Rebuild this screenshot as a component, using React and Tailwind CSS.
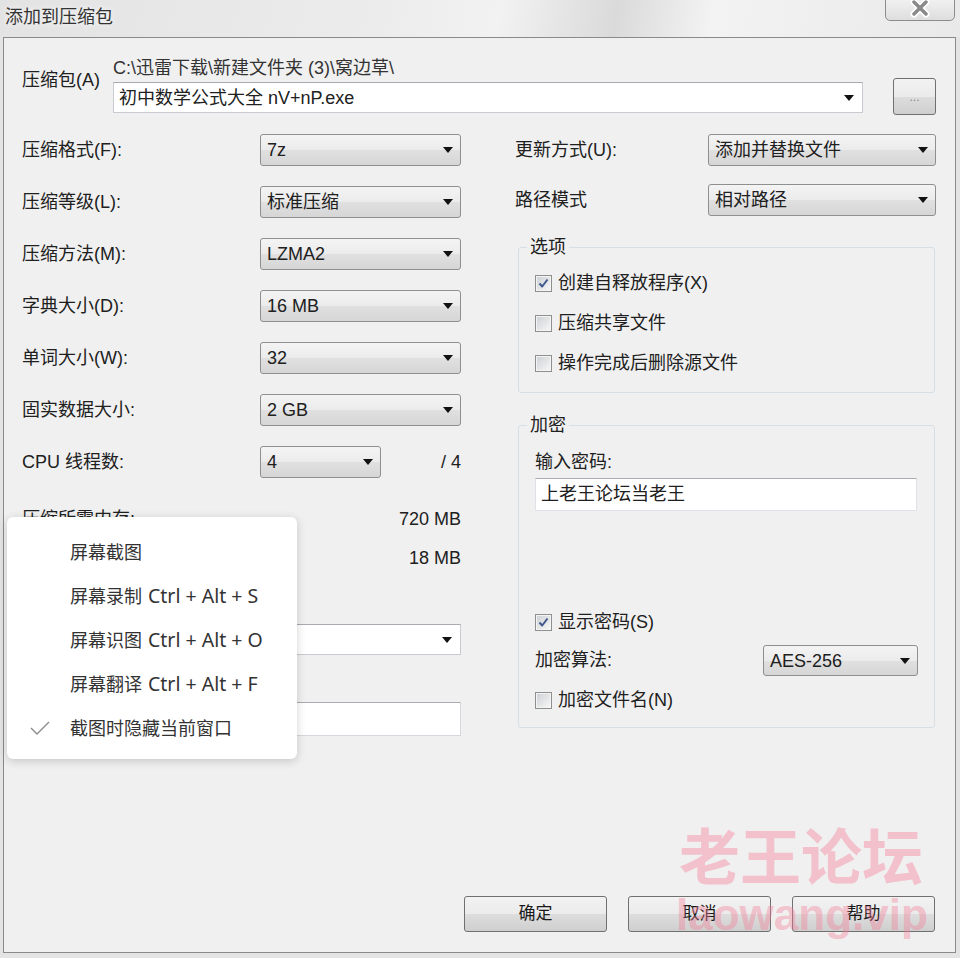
import React from "react";

const Arrow = () => (
  <svg width="10" height="6" viewBox="0 0 10 6" className="shrink-0">
    <polygon points="0,0 10,0 5,6" fill="#111" />
  </svg>
);

// Win7 style read-only combobox
const Combo = ({ value, className = "" }) => (
  <div
    className={`flex items-center justify-between rounded-[3px] border border-[#8e8f8f] bg-[linear-gradient(#f4f4f4_0%,#ebebeb_50%,#e0e0e0_51%,#d6d6d6_100%)] pl-[6px] pr-[7px] leading-[20px] ${className}`}
  >
    <span>{value}</span>
    <Arrow />
  </div>
);

const EditCombo = ({ value, className = "" }) => (
  <div
    className={`flex items-center justify-between border border-[#c9cbd0] border-t-[#a9abb0] bg-white pl-[5px] pr-[8px] leading-[20px] ${className}`}
  >
    <span>{value}</span>
    <Arrow />
  </div>
);

const Check = ({ checked }) => (
  <span className="flex h-[17px] w-[17px] shrink-0 items-center justify-center border border-[#8e8f8f] bg-[#f4f4f4]">
    <span className="flex h-[13px] w-[13px] items-center justify-center bg-linear-to-br from-[#cfd2d6] to-[#f6f6f6]">
      {checked && (
        <svg width="13" height="13" viewBox="0 0 13 13">
          <path
            d="M2.5 6.5 L5.2 9.5 L10.5 2.5"
            fill="none"
            stroke="#3f5a8f"
            strokeWidth="2"
            strokeLinejoin="round"
          />
        </svg>
      )}
    </span>
  </span>
);

const CheckRow = ({ checked, label, className = "" }) => (
  <div className={`flex h-[20px] items-center pl-[16px] ${className}`}>
    <Check checked={checked} />
    <span className="ml-[6px] leading-[20px]">{label}</span>
  </div>
);

const Button = ({ children, className = "" }) => (
  <div
    className={`flex items-center justify-center rounded-[3px] border border-[#707070] bg-[linear-gradient(#f2f2f2_0%,#ebebeb_50%,#dddddd_51%,#cfcfcf_100%)] text-[17px] text-[#1a1a1a] ${className}`}
  >
    {children}
  </div>
);

const leftRows = [
  ["压缩格式(F):", "7z"],
  ["压缩等级(L):", "标准压缩"],
  ["压缩方法(M):", "LZMA2"],
  ["字典大小(D):", "16 MB"],
  ["单词大小(W):", "32"],
  ["固实数据大小:", "2 GB"],
];

const menuItems = [
  ["屏幕截图", ""],
  ["屏幕录制", "Ctrl + Alt + S"],
  ["屏幕识图", "Ctrl + Alt + O"],
  ["屏幕翻译", "Ctrl + Alt + F"],
];

export default function App() {
  return (
    <div className="relative h-[958px] w-[960px] overflow-hidden bg-[#e4e4e4] font-['Liberation_Sans','Noto_Sans_CJK_SC',sans-serif] text-[18px] text-[#202020]">
      {/* title bar */}
      <div className="flex h-[37px] items-start justify-between bg-[linear-gradient(100deg,#e3e3e3_0%,#ececec_40%,#f2f2f2_52%,#dadada_64%,#f3f3f3_74%,#e9e9e9_100%)]">
        <div className="pl-[5px] pt-[6px] leading-[22px] text-[#333] [text-shadow:0_0_6px_#fff]">
          添加到压缩包
        </div>
        <div className="mr-[5px] -mt-[3px] flex h-[24px] w-[70px] items-start justify-center rounded-b-[5px] border border-[#8c8c8c] bg-linear-to-b from-[#f2f2f2] to-[#dedede]">
          <svg width="20" height="20" viewBox="0 0 20 20">
            <path d="M4 4 L16 16 M16 4 L4 16" stroke="#fff" strokeWidth="7" strokeLinecap="round" />
            <path d="M4 4 L16 16 M16 4 L4 16" stroke="#8a8a8a" strokeWidth="3.5" strokeLinecap="round" />
          </svg>
        </div>
      </div>

      {/* dialog body */}
      <div className="ml-[3px] mr-[4px] flex h-[916px] flex-col border border-[#8a8a8a] bg-[#f0f0f0]">
        {/* archive row */}
        <div className="mt-[20px] flex items-start pl-[18px]">
          <div className="w-[91px] shrink-0 pt-[12px] leading-[20px]">压缩包(A)</div>
          <div className="w-[750px] shrink-0">
            <div className="h-[20px] leading-[20px] text-[#333]">C:\迅雷下载\新建文件夹 (3)\窝边草\</div>
            <EditCombo value="初中数学公式大全 nV+nP.exe" className="mt-[4px] h-[31px]" />
          </div>
          <Button className="ml-[30px] mt-[20px] h-[37px] w-[43px] !text-[12px] !text-[#888]">...</Button>
        </div>

        {/* two columns */}
        <div className="mt-[19px] flex gap-[54px] pl-[18px] pr-[19px]">
          {/* left */}
          <div className="flex w-[439px] shrink-0 flex-col">
            <div className="flex flex-col gap-[20px]">
              {leftRows.map(([label, value]) => (
                <div key={label} className="flex h-[32px] items-center justify-between">
                  <span>{label}</span>
                  <Combo value={value} className="h-[32px] w-[201px]" />
                </div>
              ))}
              <div className="flex h-[32px] items-center">
                <span className="w-[238px] shrink-0">CPU 线程数:</span>
                <Combo value="4" className="h-[32px] w-[121px]" />
                <span className="ml-auto">/ 4</span>
              </div>
            </div>
            <div className="mt-[31px] flex justify-between leading-[20px]">
              <span>压缩所需内存:</span>
              <span>720 MB</span>
            </div>
            <div className="mt-[19px] flex justify-between leading-[20px]">
              <span>解压缩所需内存:</span>
              <span>18 MB</span>
            </div>
            <div className="mt-[22px] leading-[20px]">分卷大小,字节(V):</div>
            <EditCombo value="" className="mt-[14px] h-[31px]" />
            <div className="mt-[15px] leading-[20px]">参数(P):</div>
            <div className="mt-[12px] h-[34px] border border-[#d5d7dc] border-t-[#abadb3] bg-white" />
          </div>

          {/* right */}
          <div className="flex w-[421px] shrink-0 flex-col">
            <div className="flex h-[32px] items-center justify-between">
              <span>更新方式(U):</span>
              <Combo value="添加并替换文件" className="h-[32px] w-[228px]" />
            </div>
            <div className="mt-[18px] flex h-[32px] items-center justify-between">
              <span>路径模式</span>
              <Combo value="相对路径" className="h-[32px] w-[228px]" />
            </div>

            <fieldset className="ml-[3px] mt-[21px] w-[417px] rounded-[3px] border border-[#d5dfe5] pb-[19px]">
              <legend className="ml-[8px] px-[3px] leading-[20px]">选项</legend>
              <div className="mt-[16px] flex flex-col gap-[20px]">
                <CheckRow checked label="创建自释放程序(X)" />
                <CheckRow label="压缩共享文件" />
                <CheckRow label="操作完成后删除源文件" />
              </div>
            </fieldset>

            <fieldset className="ml-[3px] mt-[22px] w-[417px] rounded-[3px] border border-[#d5dfe5] pb-[17px]">
              <legend className="ml-[8px] px-[3px] leading-[20px]">加密</legend>
              <div className="mt-[17px] pl-[16px] leading-[20px]">输入密码:</div>
              <div className="ml-[16px] mt-[6px] flex h-[33px] w-[382px] items-center border border-[#e0e2e8] border-t-[#abadb3] bg-white pl-[5px]">
                上老王论坛当老王
              </div>
              <CheckRow checked label="显示密码(S)" className="mt-[101px]" />
              <div className="mt-[13px] flex h-[31px] items-center justify-between pl-[16px] pr-[16px]">
                <span>加密算法:</span>
                <Combo value="AES-256" className="h-[31px] w-[155px]" />
              </div>
              <CheckRow label="加密文件名(N)" className="mt-[14px]" />
            </fieldset>
          </div>
        </div>

        {/* buttons */}
        <div className="mt-auto flex justify-end gap-[21px] pb-[20px] pr-[20px]">
          <Button className="h-[36px] w-[143px]">确定</Button>
          <Button className="h-[36px] w-[143px]">取消</Button>
          <Button className="h-[36px] w-[143px]">帮助</Button>
        </div>
      </div>

      {/* watermark */}
      <div className="absolute left-[679px] top-[823px] font-['Noto_Sans_CJK_SC',sans-serif] text-[61px] font-bold leading-none text-[#f47b96]/40">
        老王论坛
      </div>
      <div className="absolute left-[676px] top-[893px] font-['Liberation_Sans',sans-serif] text-[44px] font-bold leading-none text-[#f47b96]/40">
        laowang.vip
      </div>

      {/* screenshot tool context menu */}
      <div className="absolute left-[7px] top-[517px] flex h-[242px] w-[290px] flex-col rounded-[6px] bg-white pb-[9px] pt-[13px] font-['Noto_Sans','Noto_Sans_CJK_SC',sans-serif] text-[#333] shadow-[0_2px_10px_rgba(0,0,0,0.18)]">
        {menuItems.map(([cn, keys]) => (
          <div key={cn} className="flex h-[44px] items-center pl-[63px]">
            <span>{cn}</span>
            {keys && <span className="ml-[6px] text-[19.5px]">{keys}</span>}
          </div>
        ))}
        <div className="flex h-[44px] items-center">
          <span className="flex w-[63px] shrink-0 pl-[23px]">
            <svg width="20" height="16" viewBox="0 0 20 16">
              <path d="M1 8 L7 14 L19 2" fill="none" stroke="#8a8a8a" strokeWidth="1.4" />
            </svg>
          </span>
          <span>截图时隐藏当前窗口</span>
        </div>
      </div>
    </div>
  );
}
